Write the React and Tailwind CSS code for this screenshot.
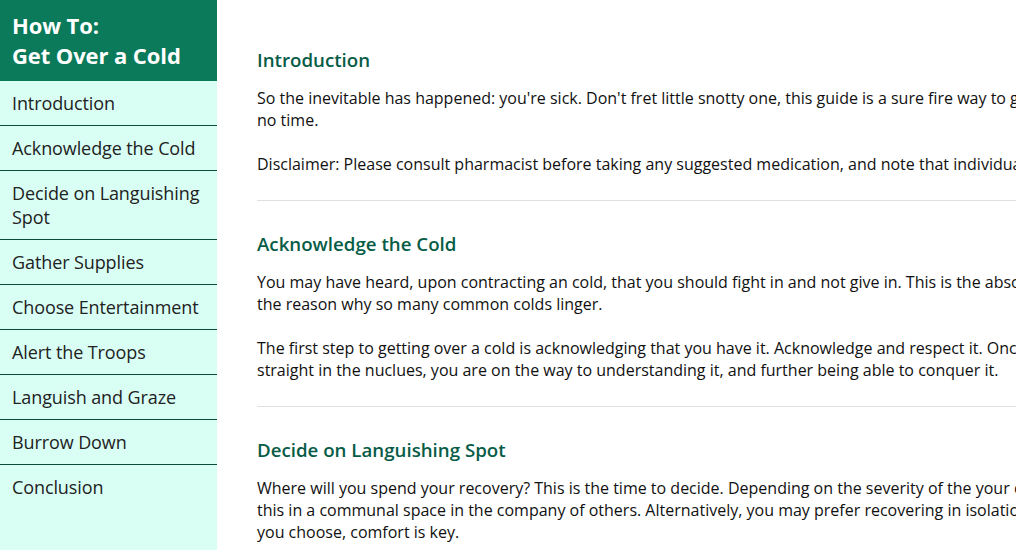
import React from 'react';

const navItems = [
  'Introduction',
  'Acknowledge the Cold',
  'Decide on Languishing Spot',
  'Gather Supplies',
  'Choose Entertainment',
  'Alert the Troops',
  'Languish and Graze',
  'Burrow Down',
  'Conclusion',
];

const sections = [
  {
    title: 'Introduction',
    paras: [
      [
        "So the inevitable has happened: you're sick. Don't fret little snotty one, this guide is a sure fire way to get you back on your feet in",
        'no time.',
      ],
      [
        'Disclaimer: Please consult pharmacist before taking any suggested medication, and note that individual results may vary.',
      ],
    ],
  },
  {
    title: 'Acknowledge the Cold',
    paras: [
      [
        'You may have heard, upon contracting an cold, that you should fight in and not give in. This is the absolute wrong approach, and',
        'the reason why so many common colds linger.',
      ],
      [
        'The first step to getting over a cold is acknowledging that you have it. Acknowledge and respect it. Once you look it',
        'straight in the nuclues, you are on the way to understanding it, and further being able to conquer it.',
      ],
    ],
  },
  {
    title: 'Decide on Languishing Spot',
    paras: [
      [
        'Where will you spend your recovery? This is the time to decide. Depending on the severity of the your cold, you may choose to do',
        'this in a communal space in the company of others. Alternatively, you may prefer recovering in isolation. Wherever',
        'you choose, comfort is key.',
      ],
    ],
  },
];

const App = () => {
  return (
    <div
      className="flex h-[550px] w-[1016px] overflow-hidden bg-white"
      style={{ fontFamily: '"Open Sans", "Liberation Sans", sans-serif' }}
    >
      {/* Sidebar */}
      <nav className="w-[217px] shrink-0 bg-[#d9fff5]">
        <header className="bg-[#0a7a5a] px-3 pt-[10px] pb-[11px]">
          <h1 className="text-[22px] leading-[30px] font-bold tracking-[-0.1px] text-white">
            How To:
            <br />
            Get Over a Cold
          </h1>
        </header>
        <ul>
          {navItems.map((item, i) => (
            <li
              key={item}
              className={
                'px-3 py-[10px] text-[18px] leading-[24px] tracking-[-0.1px] text-[#222]' +
                (i < navItems.length - 1 ? ' border-b border-[#0b4d3b]' : '')
              }
            >
              {item}
            </li>
          ))}
        </ul>
      </nav>

      {/* Main content */}
      <main className="flex-1 overflow-hidden pl-10 pt-[46px]">
        <div className="w-[1000px]">
          {sections.map((section, i) => (
            <section key={section.title}>
              <h2 className="mb-[13px] text-[18.7px] leading-[28px] font-semibold text-[#075c47]">
                {section.title}
              </h2>
              <div className="space-y-[22px]">
                {section.paras.map((lines, j) => (
                  <p
                    key={j}
                    className="whitespace-nowrap text-[16px] leading-[22px] text-[#111]"
                  >
                    {lines.map((line, k) => (
                      <React.Fragment key={k}>
                        {k > 0 && <br />}
                        {line}
                      </React.Fragment>
                    ))}
                  </p>
                ))}
              </div>
              {i < sections.length - 1 && (
                <hr className="mt-[25px] mb-[29px] border-t border-[#e0e0e0]" />
              )}
            </section>
          ))}
        </div>
      </main>
    </div>
  );
};

export default App;
